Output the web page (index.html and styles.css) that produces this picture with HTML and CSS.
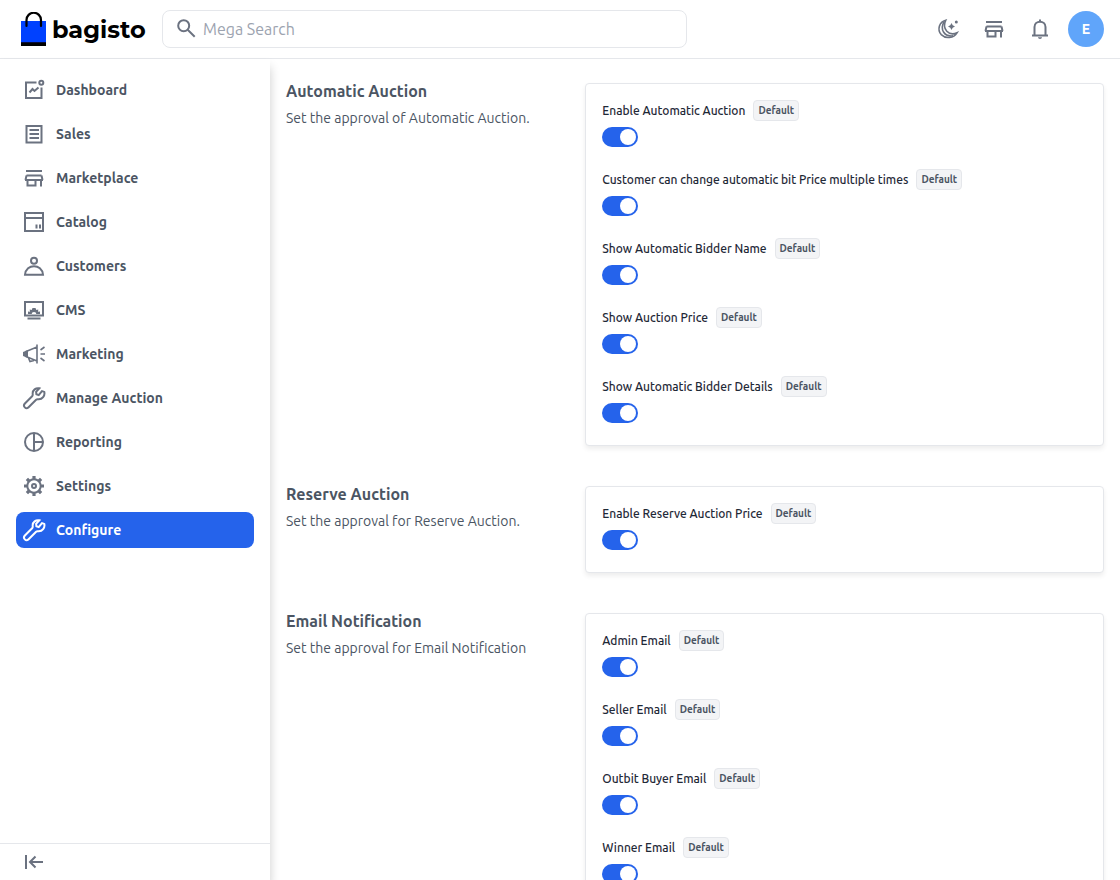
FILE: index.html
```
<!DOCTYPE html>
<html lang="en">
<head>
<meta charset="utf-8">
<meta name="viewport" content="width=device-width, initial-scale=1">
<title>Configure</title>
<link rel="stylesheet" href="styles.css">
</head>
<body>
<svg class="sprite" aria-hidden="true">
  <symbol id="store" viewBox="0 0 24 24"><path d="M4 5h16M4.500 9.500h15M4.500 9.500L3.500 14M19.500 9.500l1 4.500M3 14h18M5.500 14v5.500h8V14M19 14v6.500"/></symbol>
  <symbol id="wrench" viewBox="0 0 24 24"><path d="M20.300 4.800l-3.300 4-2.300-.8-.3-2.500 3.200-3.500c-3.300-.7-7 1.700-6.600 5.700.1 1 .1 1.600-.6 2.300l-7.200 7.200c-2.500 2.700 1 6.300 3.700 3.700l7.500-7.500c.6-.6 1.300-.6 2.200-.5 4 .3 6.900-3.500 6-7.300z" transform="translate(-.3 .3)"/></symbol>
</svg>
<div class="app">
  <header class="topbar">
    <a class="brand" href="#" aria-label="bagisto">
      <svg class="brand-mark" viewBox="0 0 25 35" aria-hidden="true">
        <path d="M0 9h25v23H0z" fill="#0041ff"/><path d="M0 30h25v4H0z" fill="#060c3b"/><path d="M0 31h25v3H0z" fill="#000"/>
        <path d="M5.500 14V8a7.200 7.200 0 0 1 14.500 0v6" fill="none" stroke="#000" stroke-width="2.200" stroke-linecap="round"/>
      </svg>
      <span class="brand-name">bagisto</span>
    </a>
    <label class="search">
      <svg class="icon" viewBox="0 0 24 24" aria-hidden="true"><circle cx="8.700" cy="8.700" r="5.500"/><path d="M12.700 12.700l7 7"/></svg>
      <input type="search" placeholder="Mega Search" aria-label="Mega Search">
    </label>
    <div class="actions">
      <button type="button" aria-label="Dark mode"><svg class="icon thin" viewBox="0 0 24 24"><path d="M9.800 3.200C3 5 1 12.500 5.200 17.600c4.600 4.500 12.500 3.500 15.800-1.800C13 19.500 5.500 12 9.800 3.200z"/><path d="M8 5C3.800 12 8 20 17 18.800"/><path class="solid" d="M15.500 6l1.200 2.300L19 9.500l-2.300 1.200L15.500 13l-1.200-2.300L12 9.500l2.300-1.200z"/><circle class="solid" cx="20.300" cy="5" r="1.500"/></svg></button>
      <button type="button" aria-label="Visit shop"><svg class="icon"><use href="#store"/></svg></button>
      <button type="button" aria-label="Notifications"><svg class="icon" viewBox="0 0 24 24"><path d="M4 18.500h16M6.500 18.500V10c0-7 11-7 11 0v8.500M12 4.500V2.500"/><path class="solid" d="M10 20.300h4c0 2.300-4 2.300-4 0z"/></svg></button>
      <button type="button" class="avatar" aria-label="Account">E</button>
    </div>
  </header>
  <div class="body">
    <aside class="sidebar">
      <nav class="nav">
        <a href="#"><svg class="icon" viewBox="0 0 24 24"><path d="M14.500 4.500H4v15.500h15.500V9.500M7.500 14.500l3-3.500 2 2 4-3.500"/><circle cx="19.300" cy="4.700" r="2"/></svg>Dashboard</a>
        <a href="#"><svg class="icon" viewBox="0 0 24 24"><path d="M4.500 4h15v16.500h-15zM7.500 8h9.500M7.500 12h9.500M7.500 16h9.500"/></svg>Sales</a>
        <a href="#"><svg class="icon"><use href="#store"/></svg>Marketplace</a>
        <a href="#"><svg class="icon" viewBox="0 0 24 24"><path d="M3 3h18v18H3zM3 8h18M14.500 14.500v4M18 14.500v4"/></svg>Catalog</a>
        <a href="#"><svg class="icon" viewBox="0 0 24 24"><circle cx="12" cy="6.800" r="3"/><path d="M3 20.800h18c-1-11.500-17-11.500-18 0z"/></svg>Customers</a>
        <a href="#"><svg class="icon" viewBox="0 0 24 24"><path d="M3 4h18v13.500H3zM5.500 20.500h13"/><path class="solid" d="M6 16v-2.500l2 .2-.3-2.200 2 .6.800-2h3l.8 2 2-.6-.3 2.200 2-.2V16h-3.700a2.300 2 0 0 0-4.600 0z"/></svg>CMS</a>
        <a href="#"><svg class="icon thin" viewBox="0 0 24 24"><path d="M15 2.500v19M15 5L4 9.500v5L15 19M18.500 8l4-3M18.500 12H23M18.500 16l4 3M6.500 16l1.500 3.500 4-1"/><path class="solid" d="M1 10l5-2v8l-5-2z"/></svg>Marketing</a>
        <a href="#"><svg class="icon"><use href="#wrench"/></svg>Manage Auction</a>
        <a href="#"><svg class="icon" viewBox="0 0 24 24"><circle cx="12" cy="12" r="9"/><path d="M12 3v18M12 12h9"/></svg>Reporting</a>
        <a href="#"><svg class="icon" viewBox="0 0 24 24"><circle cx="12" cy="12" r="6.700"/><circle cx="12" cy="12" r="2"/><path class="teeth" d="M12 2v3M12 19v3M2 12h3M19 12h3M4.900 4.900L7 7M17 17l2.100 2.100M19.100 4.900L17 7M7 17l-2.100 2.100"/></svg>Settings</a>
        <a href="#" class="active" aria-current="page"><svg class="icon"><use href="#wrench"/></svg>Configure</a>
      </nav>
      <div class="sidebar-foot">
        <button type="button" aria-label="Collapse menu"><svg class="icon" viewBox="0 0 24 24"><path d="M4 5v14M8 12h13M13.500 6.500L8 12l5.500 5.500"/></svg></button>
      </div>
    </aside>
    <main class="content">
      <section class="group">
        <div><h2>Automatic Auction</h2><p>Set the approval of Automatic Auction.</p></div>
        <div class="card">
          <div class="field"><div class="field-head"><label for="f1">Enable Automatic Auction</label><span class="tag">Default</span></div><input id="f1" type="checkbox" role="switch" checked></div>
          <div class="field"><div class="field-head"><label for="f2">Customer can change automatic bit Price multiple times</label><span class="tag">Default</span></div><input id="f2" type="checkbox" role="switch" checked></div>
          <div class="field"><div class="field-head"><label for="f3">Show Automatic Bidder Name</label><span class="tag">Default</span></div><input id="f3" type="checkbox" role="switch" checked></div>
          <div class="field"><div class="field-head"><label for="f4">Show Auction Price</label><span class="tag">Default</span></div><input id="f4" type="checkbox" role="switch" checked></div>
          <div class="field"><div class="field-head"><label for="f5">Show Automatic Bidder Details</label><span class="tag">Default</span></div><input id="f5" type="checkbox" role="switch" checked></div>
        </div>
      </section>
      <section class="group">
        <div><h2>Reserve Auction</h2><p>Set the approval for Reserve Auction.</p></div>
        <div class="card">
          <div class="field"><div class="field-head"><label for="f6">Enable Reserve Auction Price</label><span class="tag">Default</span></div><input id="f6" type="checkbox" role="switch" checked></div>
        </div>
      </section>
      <section class="group">
        <div><h2>Email Notification</h2><p>Set the approval for Email Notification</p></div>
        <div class="card">
          <div class="field"><div class="field-head"><label for="f7">Admin Email</label><span class="tag">Default</span></div><input id="f7" type="checkbox" role="switch" checked></div>
          <div class="field"><div class="field-head"><label for="f8">Seller Email</label><span class="tag">Default</span></div><input id="f8" type="checkbox" role="switch" checked></div>
          <div class="field"><div class="field-head"><label for="f9">Outbit Buyer Email</label><span class="tag">Default</span></div><input id="f9" type="checkbox" role="switch" checked></div>
          <div class="field"><div class="field-head"><label for="f10">Winner Email</label><span class="tag">Default</span></div><input id="f10" type="checkbox" role="switch" checked></div>
        </div>
      </section>
    </main>
  </div>
</div>
</body>
</html>
```
FILE: styles.css
```
* { box-sizing: border-box; }
body { margin: 0; background: #fff; color: #4b5563; font-family: Ubuntu, "Noto Sans", sans-serif; font-size: 14px; line-height: 20px; }
button { display: flex; align-items: center; justify-content: center; padding: 0; border: 0; background: none; color: inherit; font: inherit; cursor: pointer; }
a { color: inherit; text-decoration: none; }
.sprite { position: absolute; width: 0; height: 0; }
.icon { width: 24px; height: 24px; flex: none; fill: none; stroke: currentColor; stroke-width: 2; color: #6b7280; }
.icon.thin { stroke-width: 1.6; }
.icon .solid { fill: currentColor; stroke: none; }
.icon .teeth { stroke-width: 3.2; }
.app { display: flex; flex-direction: column; height: 100vh; }

.topbar { display: flex; align-items: center; flex: none; padding: 10px 16px; border-bottom: 1px solid #e5e7eb; }
.brand { display: flex; align-items: center; gap: 6px; width: 146px; padding-left: 5px; color: #000; }
.brand-mark { width: 25px; height: 35px; flex: none; }
.brand-name { font-family: Montserrat, Inter, sans-serif; font-size: 24px; font-weight: 700; line-height: 32px; padding-top: 2px; }
.search { display: flex; align-items: center; gap: 4px; flex: 0 1 525px; height: 38px; padding: 0 12px; border: 1px solid #e5e7eb; border-radius: 8px; }
.search input { flex: 1; min-width: 0; padding: 0; border: 0; outline: 0; background: none; color: #4b5563; font: inherit; font-size: 16px; }
.search input::placeholder { color: #9ca3af; opacity: 1; }
.actions { display: flex; align-items: center; gap: 10px; margin-left: auto; }
.actions button { width: 36px; height: 36px; }
.actions .avatar { border-radius: 50%; background: #60a5fa; color: #fff; font-size: 14px; font-weight: 700; }

.body { display: flex; flex: 1; min-height: 0; }
.sidebar { display: flex; flex-direction: column; flex: none; width: 270px; background: #fff; box-shadow: 0 8px 10px rgba(0, 0, 0, .2); }
.nav { display: flex; flex-direction: column; gap: 8px; flex: 1; padding: 13px 16px; overflow: hidden; }
.nav a { display: flex; align-items: center; gap: 10px; flex: none; height: 36px; padding: 6px; border-radius: 8px; font-weight: 700; }
.nav .active { background: #2563eb; color: #fff; }
.nav .active .icon { color: #fff; }
.sidebar-foot { flex: none; padding: 6px 22px; border-top: 1px solid #e5e7eb; }

.content { display: flex; flex-direction: column; gap: 40px; flex: 1; min-width: 0; padding: 24px 16px; overflow-y: auto; scrollbar-width: none; }
.group { display: grid; grid-template-columns: minmax(0, 1fr) minmax(0, 2fr); gap: 40px; flex: none; }
h2 { margin: 0; font-size: 16px; font-weight: 700; line-height: 16px; }
p { margin: 9px 0 0; }
.card { display: flex; flex-direction: column; gap: 16px; padding: 16px; border: 1px solid #e5e7eb; border-radius: 4px; background: #fff; box-shadow: 0 3px 5px rgba(0, 0, 0, .07); }
.field { padding-bottom: 6px; }
.field-head { display: flex; align-items: center; gap: 8px; height: 21px; margin-bottom: 6px; color: #1f2937; font-size: 12px; font-weight: 500; line-height: 16px; white-space: nowrap; }
.tag { padding: 2px 4px; border: 1px solid #e5e7eb; border-radius: 4px; background: #f3f4f6; color: #4b5563; font-size: 10px; font-weight: 700; line-height: 15px; }
.field input { display: flex; align-items: center; justify-content: flex-end; appearance: none; width: 36px; height: 20px; margin: 0; padding: 2px; border-radius: 10px; background: #2563eb; cursor: pointer; }
.field input::before { content: ""; width: 16px; height: 16px; border-radius: 50%; background: #fff; }
.field input:not(:checked) { justify-content: flex-start; background: #e5e7eb; }
```
